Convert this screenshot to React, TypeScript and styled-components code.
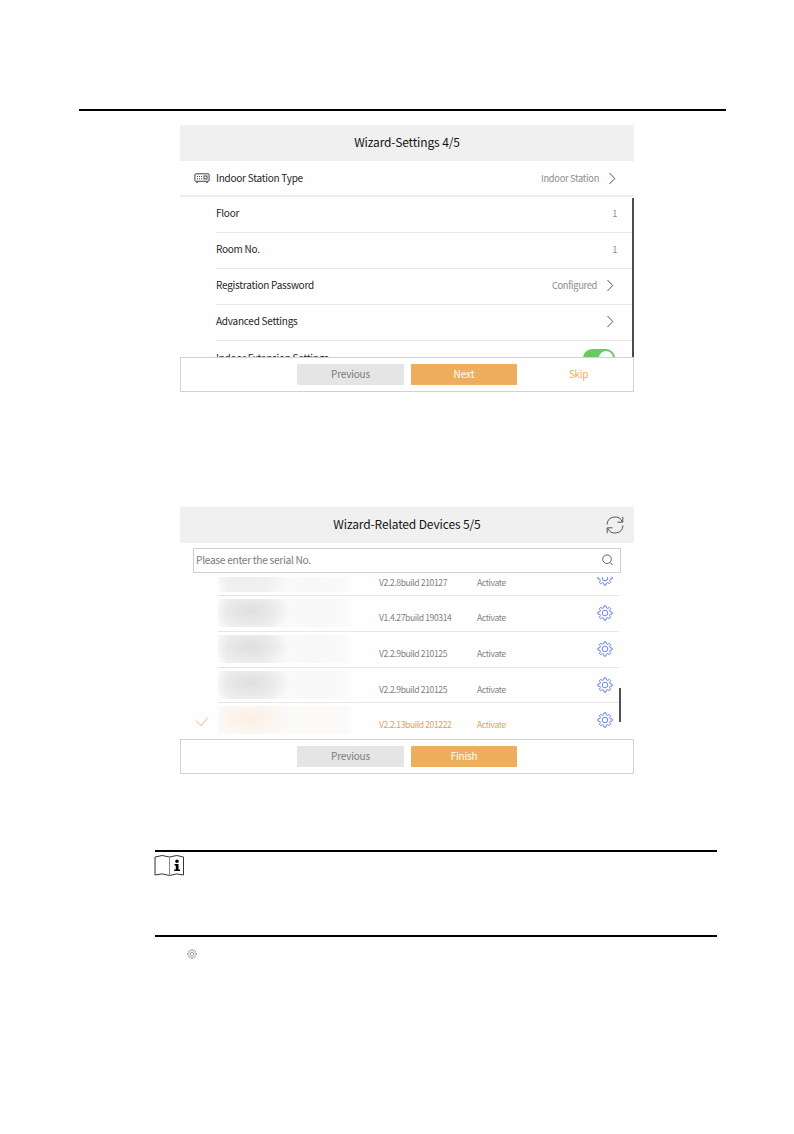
import React from 'react';
import styled, { createGlobalStyle } from 'styled-components';

const GlobalStyle = createGlobalStyle`
  * {
    box-sizing: border-box;
  }

  body {
    margin: 0;
    background-color: #fff;
  }
`;

const Page = styled.main`
  display: flex;
  flex-direction: column;
  width: 794px;
  height: 1134px;
  padding: 109px 68px 0 79px;
  overflow: hidden;
  background-color: #fff;
  font-family: 'Noto Sans CJK SC', 'Open Sans', sans-serif;
`;

const PageRule = styled.div`
  flex: none;
  height: 2px;
  background-color: #000;
`;

const Panel = styled.section<{ $top: number }>`
  display: flex;
  flex: none;
  flex-direction: column;
  width: 454px;
  height: 267px;
  margin: ${({ $top }) => $top}px 0 0 101px;
  background-color: #fefefe;
`;

const PanelHeader = styled.header`
  display: grid;
  flex: none;
  grid-template-columns: 35px 1fr 29px;
  align-items: center;
  height: 36px;
  background-color: #f0f0f0;
`;

const PanelTitle = styled.h2`
  grid-column: 2;
  margin: 0 0 2px;
  padding-right: 6px;
  font-size: 12px;
  font-weight: 400;
  line-height: 34px;
  letter-spacing: -0.13px;
  text-align: center;
  white-space: nowrap;
  color: #141414;
`;

const TypeRow = styled.div`
  display: flex;
  flex: none;
  align-items: center;
  height: 36px;
  padding: 0 18px 0 14px;
  border-bottom: 2px solid #ededed;
`;

const SettingsBody = styled.div`
  display: flex;
  height: 160px;
  padding-left: 36px;
  overflow: hidden;
`;

const SettingsList = styled.div`
  flex: 1;
`;

const SettingRow = styled.div<{ $right: number }>`
  display: flex;
  align-items: center;
  height: 36px;
  padding: 0 ${({ $right }) => $right}px 3px 0;
  border-bottom: 1px solid #e8e8e8;

  &:last-child {
    padding-bottom: 1px;
  }
`;

const Label = styled.span<{ $left?: number }>`
  flex: 1;
  padding-left: ${({ $left = 0 }) => $left}px;
  font-size: 10px;
  line-height: 14px;
  letter-spacing: -0.25px;
  white-space: nowrap;
  color: #1e1e1e;
`;

const Value = styled.span`
  font-size: 9.3px;
  line-height: 14px;
  letter-spacing: -0.3px;
  white-space: nowrap;
  color: #8c8c8c;
`;

const ChevronIcon = styled.svg`
  width: 8px;
  height: 13px;
  margin: 1px 0 0 9px;
  fill: none;
  stroke: #555;
`;

const Scrollbar = styled.div`
  width: 2px;
  height: 159px;
  margin-top: 1px;
  background-color: #4c4c4c;
`;

const Toggle = styled.div`
  display: flex;
  align-items: center;
  justify-content: flex-end;
  width: 32px;
  height: 18px;
  padding: 2px;
  border-radius: 9px;
  background-color: #69c967;
`;

const Knob = styled.div`
  width: 14px;
  height: 14px;
  border-radius: 50%;
  background-color: #fff;
`;

const PanelFooter = styled.footer`
  display: grid;
  flex: none;
  grid-template-columns: 107px 106px 106px;
  justify-content: end;
  align-items: center;
  column-gap: 7px;
  height: 35px;
  padding-right: 3px;
  border: 1px solid #d2d2d2;
  background-color: #fff;
`;

const Button = styled.button<{ $variant: 'grey' | 'orange' | 'text'; $spacing?: number }>`
  height: 21px;
  padding: 0 0 2px;
  border: 0;
  border-radius: 1px;
  font-family: inherit;
  font-size: 10px;
  line-height: 19px;
  letter-spacing: ${({ $spacing = 0 }) => $spacing}px;
  color: ${({ $variant }) =>
    $variant === 'grey' ? '#7c7c7c' : $variant === 'orange' ? '#fff' : '#eeae5e'};
  background-color: ${({ $variant }) =>
    $variant === 'grey' ? '#e5e5e5' : $variant === 'orange' ? '#eeae5e' : 'transparent'};
`;

const SkipButton = styled(Button)`
  padding-left: 3px;
`;

const SearchBox = styled.div`
  display: flex;
  flex: none;
  align-items: center;
  justify-content: space-between;
  width: 428px;
  height: 25px;
  margin: 5px 0 0 13px;
  padding: 0 7px 2px 2px;
  border: 1px solid #cfcfcf;
  background-color: #fff;
`;

const Placeholder = styled.span`
  font-size: 10.2px;
  line-height: 14px;
  letter-spacing: -0.3px;
  white-space: nowrap;
  color: #7c7c7c;
`;

const DeviceBody = styled.div`
  display: flex;
  height: 166px;
  padding-top: 4px;
`;

/* The list is scrolled, so its first row sticks out above the box. */
const DeviceList = styled.div`
  display: flex;
  flex-direction: column;
  justify-content: flex-end;
  width: 439px;
  height: 162px;
  overflow: hidden;
`;

const DeviceRow = styled.div`
  display: grid;
  flex: none;
  grid-template-columns: 38px 161px 98px 120px 16px;
  height: 35.7px;
`;

const DeviceLine = styled.div`
  flex: none;
  height: 1px;
  margin: -1px 0 0 38px;
  background-color: #e7e7e7;
`;

const CheckIcon = styled.svg`
  width: 14px;
  height: 11px;
  margin: 13px 0 0 15px;
  fill: none;
  stroke: #e4b878;
`;

type Tone = 'grey' | 'pale' | 'orange';

const blotColors: Record<Tone, string> = {
  grey: '#dfdfdf',
  pale: '#eeeeee',
  orange: '#fbf0e4',
};

const MaskedName = styled.div<{ $tone: Tone }>`
  width: 135px;
  height: 28px;
  margin-top: 3px;
  background:
    radial-gradient(
      ellipse 42px 20px at 32px 12px,
      ${({ $tone }) => blotColors[$tone]},
      transparent
    ),
    linear-gradient(
      90deg,
      #fcfcfc,
      ${({ $tone }) => ($tone === 'orange' ? '#fcf9f6' : '#f1f1f1')} 10px,
      ${({ $tone }) => ($tone === 'orange' ? '#fcf9f6' : '#f1f1f1')} 46px,
      #fafafa 70px,
      ${({ $tone }) => ($tone === 'orange' ? '#fdfaf5' : '#f8f8f8')} 94px,
      #fafafa 128px,
      #fefefe
    );
`;

const DeviceText = styled.span<{ $selected?: boolean }>`
  margin-top: 14px;
  font-size: 8.6px;
  line-height: 14px;
  letter-spacing: -0.4px;
  white-space: nowrap;
  color: ${({ $selected }) => ($selected ? '#e0a555' : '#828282')};
`;

const GearSvg = styled.svg<{ $size: number; $color: string }>`
  width: ${({ $size }) => $size}px;
  height: ${({ $size }) => $size}px;
  fill: none;
  stroke: ${({ $color }) => $color};
`;

const GearCell = styled.div`
  padding-top: 9px;
  line-height: 0;
`;

const DeviceScrollbar = styled.div`
  width: 2px;
  height: 34px;
  margin-top: 111px;
  background-color: #505050;
`;

const NoteBox = styled.aside`
  flex: none;
  width: 562px;
  height: 87px;
  margin: 76px 0 0 76px;
  border-top: 2px solid #000;
  border-bottom: 2px solid #000;
`;

const BookIcon = styled.svg`
  display: block;
  width: 31px;
  height: 24px;
  margin: 2px 0 0 -1px;
  fill: none;
  stroke: #333;
`;

const FootLine = styled.div`
  padding: 12px 0 0 108px;
  line-height: 0;
`;

// Outline of an eight-toothed gear on a 16x16 grid
const gearPoints = Array.from({ length: 8 }, (_, i) => {
  const corners = [
    [-13, 5.4],
    [-8, 7.2],
    [8, 7.2],
    [13, 5.4],
  ];
  return corners
    .map(([offset, radius]) => {
      const angle = ((i * 45 + offset) * Math.PI) / 180;
      return `${(8 + radius * Math.sin(angle)).toFixed(2)},${(8 - radius * Math.cos(angle)).toFixed(2)}`;
    })
    .join(' ');
}).join(' ');

interface GearProps {
  size: number;
  color: string;
}

const Gear: React.FC<GearProps> = ({ size, color }) => (
  <GearSvg viewBox="0 0 16 16" $size={size} $color={color}>
    <polygon points={gearPoints} strokeLinejoin="round" />
    <circle cx="8" cy="8" r="2.8" />
  </GearSvg>
);

const Chevron: React.FC = () => (
  <ChevronIcon viewBox="0 0 8 13">
    <path d="M1.5 1 6.8 6.5 1.5 12" />
  </ChevronIcon>
);

const StationIcon: React.FC = () => (
  <svg width="16" height="10" viewBox="0 0 16 10" fill="none" stroke="#444">
    <rect x="0.9" y="0.8" width="14.2" height="7.5" rx="1" />
    <path d="M3 3.5h5.5M3 5.8h5.5" strokeDasharray="1 1" />
    <rect x="10" y="3" width="3" height="3" />
    <path d="M2.2 9.4h1.6M12.2 9.4h1.6" />
  </svg>
);

const RefreshIcon: React.FC = () => (
  <svg width="20" height="20" viewBox="0 0 20 20" fill="none" stroke="#555">
    <path d="M2 9.5A8 8 0 0 1 17.4 7M17.8 1.8v5.4h-5.3" />
    <path d="M18 10.5A8 8 0 0 1 2.6 13M2.2 18.2v-5.4h5.3" />
  </svg>
);

const SearchIcon: React.FC = () => (
  <svg width="11" height="12" viewBox="0 0 11 12" fill="none" stroke="#666">
    <circle cx="5" cy="5.2" r="4.3" />
    <path d="m8 8.3 2.5 2.7" />
  </svg>
);

interface Device {
  version: string;
  tone: Tone;
  selected?: boolean;
}

const devices: Device[] = [
  { version: 'V2.2.8build 210127', tone: 'pale' },
  { version: 'V1.4.27build 190314', tone: 'grey' },
  { version: 'V2.2.9build 210125', tone: 'grey' },
  { version: 'V2.2.9build 210125', tone: 'grey' },
  { version: 'V2.2.13build 201222', tone: 'orange', selected: true },
];

const SettingsPanel: React.FC = () => (
  <Panel $top={14}>
    <PanelHeader>
      <PanelTitle>Wizard-Settings 4/5</PanelTitle>
    </PanelHeader>
    <TypeRow>
      <StationIcon />
      <Label $left={6}>Indoor Station Type</Label>
      <Value>Indoor Station</Value>
      <Chevron />
    </TypeRow>
    <SettingsBody>
      <SettingsList>
        <SettingRow $right={15}>
          <Label>Floor</Label>
          <Value>1</Value>
        </SettingRow>
        <SettingRow $right={15}>
          <Label>Room No.</Label>
          <Value>1</Value>
        </SettingRow>
        <SettingRow $right={18}>
          <Label>Registration Password</Label>
          <Value>Configured</Value>
          <Chevron />
        </SettingRow>
        <SettingRow $right={18}>
          <Label>Advanced Settings</Label>
          <Chevron />
        </SettingRow>
        <SettingRow $right={17}>
          <Label>Indoor Extension Settings</Label>
          <Toggle>
            <Knob />
          </Toggle>
        </SettingRow>
      </SettingsList>
      <Scrollbar />
    </SettingsBody>
    <PanelFooter>
      <Button $variant="grey" $spacing={-0.2}>
        Previous
      </Button>
      <Button $variant="orange">Next</Button>
      <SkipButton $variant="text" $spacing={-0.3}>
        Skip
      </SkipButton>
    </PanelFooter>
  </Panel>
);

const DevicesPanel: React.FC = () => (
  <Panel $top={115}>
    <PanelHeader>
      <PanelTitle>Wizard-Related Devices 5/5</PanelTitle>
      <RefreshIcon />
    </PanelHeader>
    <SearchBox>
      <Placeholder>Please enter the serial No.</Placeholder>
      <SearchIcon />
    </SearchBox>
    <DeviceBody>
      <DeviceList>
        {devices.map(({ version, tone, selected }, index) => (
          <React.Fragment key={index}>
            {index > 0 && <DeviceLine />}
            <DeviceRow>
              <div>
                {selected && (
                  <CheckIcon viewBox="0 0 14 11">
                    <path d="M1 4.5 6 9.5 13 1.5" />
                  </CheckIcon>
                )}
              </div>
              <MaskedName $tone={tone} />
              <DeviceText $selected={selected}>{version}</DeviceText>
              <DeviceText $selected={selected}>Activate</DeviceText>
              <GearCell>
                <Gear size={16} color="#6b84ec" />
              </GearCell>
            </DeviceRow>
          </React.Fragment>
        ))}
      </DeviceList>
      <DeviceScrollbar />
    </DeviceBody>
    <PanelFooter>
      <Button $variant="grey" $spacing={-0.2}>
        Previous
      </Button>
      <Button $variant="orange" $spacing={-0.2}>
        Finish
      </Button>
    </PanelFooter>
  </Panel>
);

const App: React.FC = () => {
  return (
    <>
      <GlobalStyle />
      <Page>
        <PageRule />
        <SettingsPanel />
        <DevicesPanel />
        <NoteBox>
          <BookIcon viewBox="0 0 31 24">
            <path d="M1 3Q8 0 15.5 3 23 0 29.5 3V21Q23 18.5 15.5 21.5 8 18.5 1 21Z" />
            <path d="M15.5 3V21.5" stroke="#888" />
            <circle cx="23" cy="7.2" r="1.7" fill="#000" stroke="none" />
            <path d="M20.5 10h4v5.5h1.5v1.5h-5.8v-1.5h1.6v-4h-1.3Z" fill="#000" stroke="none" />
          </BookIcon>
        </NoteBox>
        <FootLine>
          <Gear size={10} color="#777" />
        </FootLine>
      </Page>
    </>
  );
};

export default App;
